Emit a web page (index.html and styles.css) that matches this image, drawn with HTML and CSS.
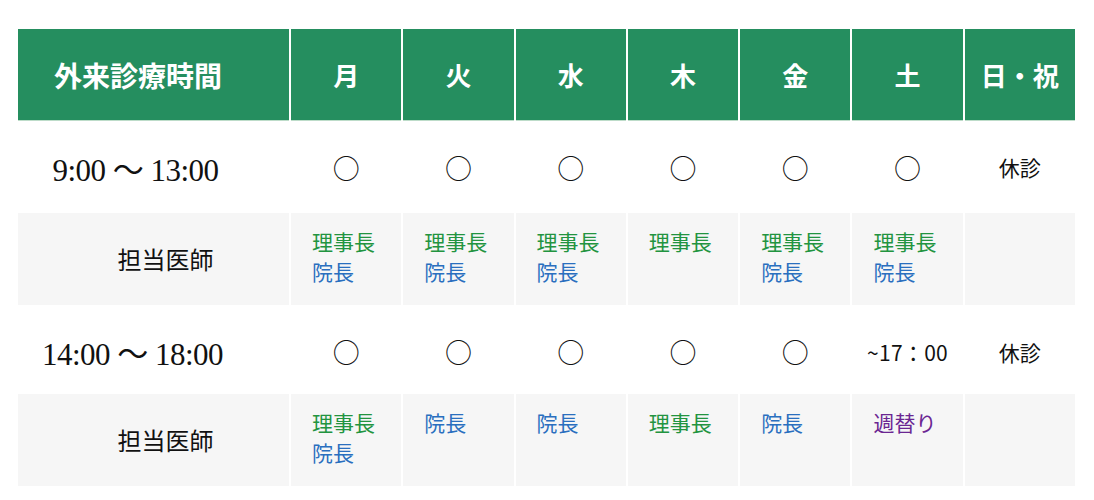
FILE: index.html
```html
<!DOCTYPE html>
<html lang="ja">
<head>
  <meta charset="UTF-8" />
  <meta name="viewport" content="width=device-width, initial-scale=1.0" />
  <title>外来診療時間</title>
  <link rel="stylesheet" href="styles.css">
</head>
<body>
  <table class="schedule">
    <colgroup>
      <col class="col-label">
      <col span="7" class="col-day">
    </colgroup>
    <thead>
      <tr>
        <th class="head-title">外来診療時間</th>
        <th>月</th>
        <th>火</th>
        <th>水</th>
        <th>木</th>
        <th>金</th>
        <th>土</th>
        <th>日・祝</th>
      </tr>
    </thead>
    <tbody>
      <!-- morning -->
      <tr class="time-row">
        <td class="time">9:00 ～ 13:00</td>
        <td class="mark">○</td>
        <td class="mark">○</td>
        <td class="mark">○</td>
        <td class="mark">○</td>
        <td class="mark">○</td>
        <td class="mark">○</td>
        <td class="closed">休診</td>
      </tr>
      <tr class="doc-row">
        <td class="doc-label">担当医師</td>
        <td><span class="chief">理事長</span><span class="director">院長</span></td>
        <td><span class="chief">理事長</span><span class="director">院長</span></td>
        <td><span class="chief">理事長</span><span class="director">院長</span></td>
        <td><span class="chief">理事長</span></td>
        <td><span class="chief">理事長</span><span class="director">院長</span></td>
        <td><span class="chief">理事長</span><span class="director">院長</span></td>
        <td></td>
      </tr>

      <!-- afternoon -->
      <tr class="time-row pm">
        <td class="time">14:00 ～ 18:00</td>
        <td class="mark">○</td>
        <td class="mark">○</td>
        <td class="mark">○</td>
        <td class="mark">○</td>
        <td class="mark">○</td>
        <td class="until">~17：00</td>
        <td class="closed">休診</td>
      </tr>
      <tr class="doc-row">
        <td class="doc-label">担当医師</td>
        <td><span class="chief">理事長</span><span class="director">院長</span></td>
        <td><span class="director">院長</span></td>
        <td><span class="director">院長</span></td>
        <td><span class="chief">理事長</span></td>
        <td><span class="director">院長</span></td>
        <td><span class="weekly">週替り</span></td>
        <td></td>
      </tr>
    </tbody>
  </table>
</body>
</html>
```

FILE: styles.css
```css
body {
  margin: 0;
  background: #fff;
  font-family: "Noto Sans CJK JP", "Noto Sans", sans-serif;
  color: #111;
}
.schedule {
  margin: 27px 0 0 16px;
  border-collapse: separate;
  border-spacing: 2px;
  table-layout: fixed;
  width: 1061px;
}
.col-label { width: 271px; }

.schedule th {
  height: 91px;
  padding: 0;
  background: #258e5f;
  border-bottom: 1px solid #bddcc9;
  color: #fff;
  font-size: 26px;
  font-weight: bold;
  text-align: center;
  vertical-align: middle;
}
.schedule th.head-title {
  font-size: 28px;
  text-align: left;
  padding-left: 36px;
}

.schedule td {
  padding: 0;
  text-align: center;
  vertical-align: middle;
}

.time-row td { height: 88px; }
.time-row.pm td { height: 81px; padding-top: 4px; }
.time {
  font-family: "Liberation Serif", "Noto Sans CJK JP", serif;
  font-size: 31px;
  letter-spacing: -0.5px;
  padding-right: 36px !important;
}
.pm .time { padding-right: 42px !important; }
.mark {
  font-size: 27px;
  line-height: 1;
}
.closed {
  font-size: 21px;
}
.until {
  font-size: 21px;
  letter-spacing: 0.3px;
}

.doc-row td {
  height: 79px;
  background: #f6f6f6;
  vertical-align: top;
  text-align: left;
  padding: 13px 0 0 21px;
  font-size: 21px;
  line-height: 30px;
}
.doc-row td.doc-label {
  height: 92px;
  vertical-align: middle;
  text-align: center;
  padding: 0 0 0 24px;
  font-size: 24px;
  color: #111;
}
.doc-row span { display: block; }
.chief { color: #229440; }
.director { color: #2a6fbf; }
.weekly { color: #6b2692; }
```
